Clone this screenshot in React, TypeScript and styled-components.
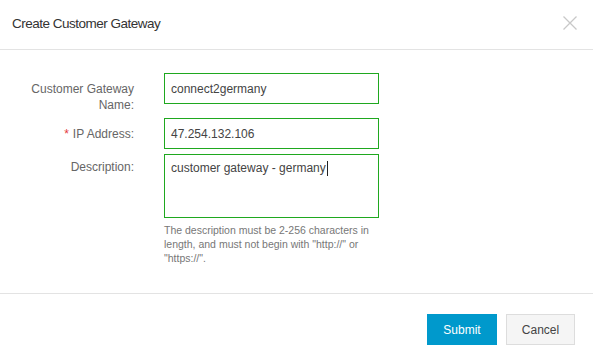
import React from 'react';
import styled, { createGlobalStyle } from 'styled-components';

const GlobalStyle = createGlobalStyle`
    html, body {
        margin: 0;
        padding: 0;
        background: #fff;
    }
    body {
        font-family: 'Liberation Sans', Arial, sans-serif;
    }
`;

const Dialog = styled.div`
    width: 593px;
    height: 364px;
    background: #fff;
    display: flex;
    flex-direction: column;
    box-sizing: border-box;
`;

const Header = styled.div`
    height: 50px;
    border-bottom: 1px solid #e3e3e3;
    display: flex;
    align-items: center;
    justify-content: space-between;
    padding: 0 16px 0 12px;
    box-sizing: border-box;
    flex-shrink: 0;
`;

const Title = styled.h1`
    margin: 0;
    font-size: 13.5px;
    letter-spacing: -0.5px;
    font-weight: normal;
    color: #333;
    padding-bottom: 2px;
`;

const CloseBtn = styled.button`
    border: none;
    background: none;
    padding: 0;
    width: 14px;
    height: 14px;
    cursor: pointer;
    display: flex;
    margin-bottom: 4px;
`;

const Body = styled.div`
    flex: 1;
    padding: 23px 0 0 0;
    border-bottom: 1px solid #e3e3e3;
`;

const Row = styled.div`
    display: flex;
    align-items: flex-start;
    margin-bottom: 5px;
`;

const Label = styled.div<{ $top?: number }>`
    width: 134px;
    margin-right: 30px;
    text-align: right;
    font-size: 12px;
    line-height: 16px;
    color: #666;
    padding-top: ${(p) => p.$top ?? 8}px;
    box-sizing: border-box;
`;

const Required = styled.span`
    color: #e4393c;
    margin-right: 4px;
`;

const Field = styled.div<{ $tall?: boolean }>`
    width: 215px;
    height: ${(p) => (p.$tall ? 64 : 31)}px;
    box-sizing: border-box;
    border: 1px solid #1fa81f;
    padding: ${(p) => (p.$tall ? '6px 6px' : '0 6px')};
    display: flex;
    align-items: ${(p) => (p.$tall ? 'flex-start' : 'center')};
    font-size: 12px;
    color: #444;
`;

const Caret = styled.span`
    display: inline-block;
    width: 1px;
    height: 15px;
    background: #222;
    margin-left: 1px;
`;

const Help = styled.p`
    margin: 2px 0 0 164px;
    width: 215px;
    font-size: 10.5px;
    line-height: 14px;
    color: #777;
`;

const Footer = styled.div`
    height: 70px;
    display: flex;
    justify-content: flex-end;
    align-items: flex-start;
    gap: 9px;
    padding: 20px 18px 0 0;
    box-sizing: border-box;
    flex-shrink: 0;
`;

const Button = styled.button<{ $primary?: boolean }>`
    width: ${(p) => (p.$primary ? 70 : 69)}px;
    height: 31px;
    font-family: inherit;
    font-size: 12px;
    cursor: pointer;
    box-sizing: border-box;
    border: 1px solid ${(p) => (p.$primary ? '#0099cc' : '#ddd')};
    background: ${(p) => (p.$primary ? '#0099cc' : '#f5f5f5')};
    color: ${(p) => (p.$primary ? '#fff' : '#444')};
`;

export default function App() {
    return (
        <Dialog>
            <GlobalStyle />
            <Header>
                <Title>Create Customer Gateway</Title>
                <CloseBtn aria-label='close'>
                    <svg width='14' height='14' viewBox='0 0 14 14'>
                        <path d='M0.5 0.5 L13.5 13.5 M13.5 0.5 L0.5 13.5' stroke='#c8c8c8' strokeWidth='1.3' />
                    </svg>
                </CloseBtn>
            </Header>
            <Body>
                <Row>
                    <Label>
                        Customer Gateway
                        <br />
                        Name:
                    </Label>
                    <Field>connect2germany</Field>
                </Row>
                <Row>
                    <Label>
                        <Required>*</Required>IP Address:
                    </Label>
                    <Field>47.254.132.106</Field>
                </Row>
                <Row>
                    <Label $top={5}>Description:</Label>
                    <Field $tall>
                        customer gateway - germany
                        <Caret />
                    </Field>
                </Row>
                <Help>
                    The description must be 2-256 characters in length, and must not begin with "http://" or "https://".
                </Help>
            </Body>
            <Footer>
                <Button $primary>Submit</Button>
                <Button>Cancel</Button>
            </Footer>
        </Dialog>
    );
}
